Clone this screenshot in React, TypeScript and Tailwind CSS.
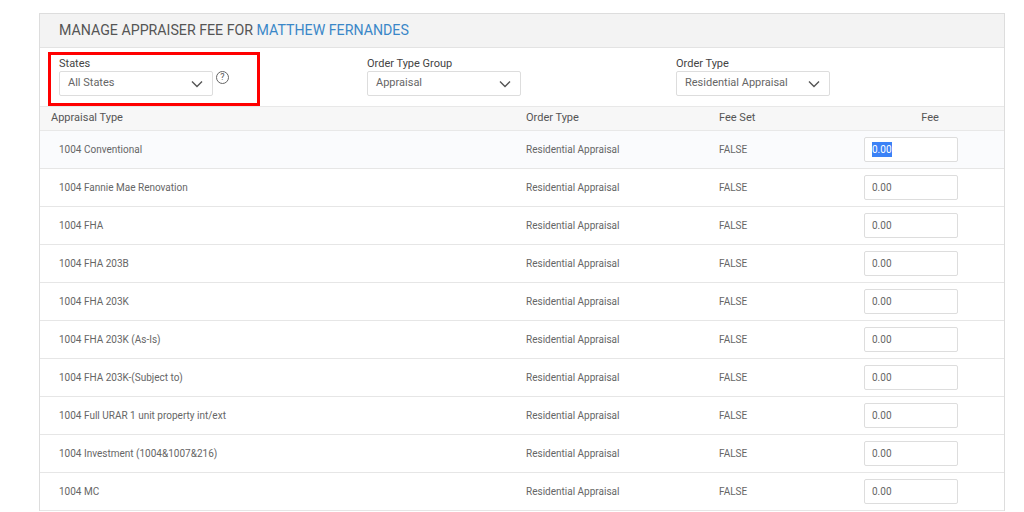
import React from "react";

const rows = [
  "1004 Conventional",
  "1004 Fannie Mae Renovation",
  "1004 FHA",
  "1004 FHA 203B",
  "1004 FHA 203K",
  "1004 FHA 203K (As-Is)",
  "1004 FHA 203K-(Subject to)",
  "1004 Full URAR 1 unit property int/ext",
  "1004 Investment (1004&1007&216)",
  "1004 MC",
];

const Chevron = () => (
  <svg width="14" height="14" viewBox="0 0 14 14" fill="none" stroke="#555" strokeWidth="1.4">
    <path d="M2 4.5l5 5 5-5" />
  </svg>
);

const Select = ({ label, value }: { label: string; value: string }) => (
  <div className="flex flex-col">
    <span className="text-[11px] text-[#444] leading-[14px]">{label}</span>
    <div className="w-[154px] h-[25px] border border-[#ddd] rounded-[2px] bg-white flex items-center justify-between pl-2 pr-2 text-[11px] text-[#666]">
      <span>{value}</span>
      <Chevron />
    </div>
  </div>
);

export default function App() {
  return (
    <div className="w-[1024px] h-[512px] overflow-hidden bg-white pt-[13px] pl-[39px]" style={{ fontFamily: "Roboto, 'Liberation Sans', sans-serif" }}>
      <div className="w-[966px] border border-[#ddd] border-b-0">
        <div className="h-[34px] bg-[#f3f3f3] border-b border-[#e3e3e3] flex items-center pl-[19px] text-[14.2px] text-[#555]">
          MANAGE APPRAISER FEE FOR&nbsp;<span className="text-[#3a87c8]">MATTHEW FERNANDES</span>
        </div>
        <div className="h-[58px] flex relative">
          <div className="absolute left-[8px] top-[4px] w-[212px] h-[54px] border-[3px] border-[#f00]" />
          <div className="pl-[19px] pt-[9px] flex items-start">
            <Select label="States" value="All States" />
            <div className="mt-[14px] ml-[3px] w-[13px] h-[13px] rounded-full border border-[#666] text-[9px] text-[#555] flex items-center justify-center leading-none">?</div>
          </div>
          <div className="pl-[138px] pt-[9px]"><Select label="Order Type Group" value="Appraisal" /></div>
          <div className="pl-[155px] pt-[9px]"><Select label="Order Type" value="Residential Appraisal" /></div>
        </div>
        <div className="h-[25px] bg-[#f7f7f7] border-y border-[#e8e8e8] flex items-center text-[11px] text-[#555]">
          <div className="w-[486px] pl-[11px]">Appraisal Type</div>
          <div className="w-[193px]">Order Type</div>
          <div className="w-[145px]">Fee Set</div>
          <div className="w-[132px] text-center">Fee</div>
        </div>
        {rows.map((r, i) => (
          <div key={r} className={`h-[38px] border-b border-[#e6e6e6] flex items-center text-[10px] text-[#666] ${i === 0 ? "bg-[#fafbfd]" : "bg-white"}`}>
            <div className="w-[486px] pl-[19px]">{r}</div>
            <div className="w-[193px]">Residential Appraisal</div>
            <div className="w-[145px]">FALSE</div>
            <div className="w-[94px] h-[25px] border border-[#ddd] rounded-[2px] bg-white flex items-center pl-[7px]">
              {i === 0 ? <span className="bg-[#3b82f6] text-white">0.00</span> : "0.00"}
            </div>
          </div>
        ))}
      </div>
    </div>
  );
}
